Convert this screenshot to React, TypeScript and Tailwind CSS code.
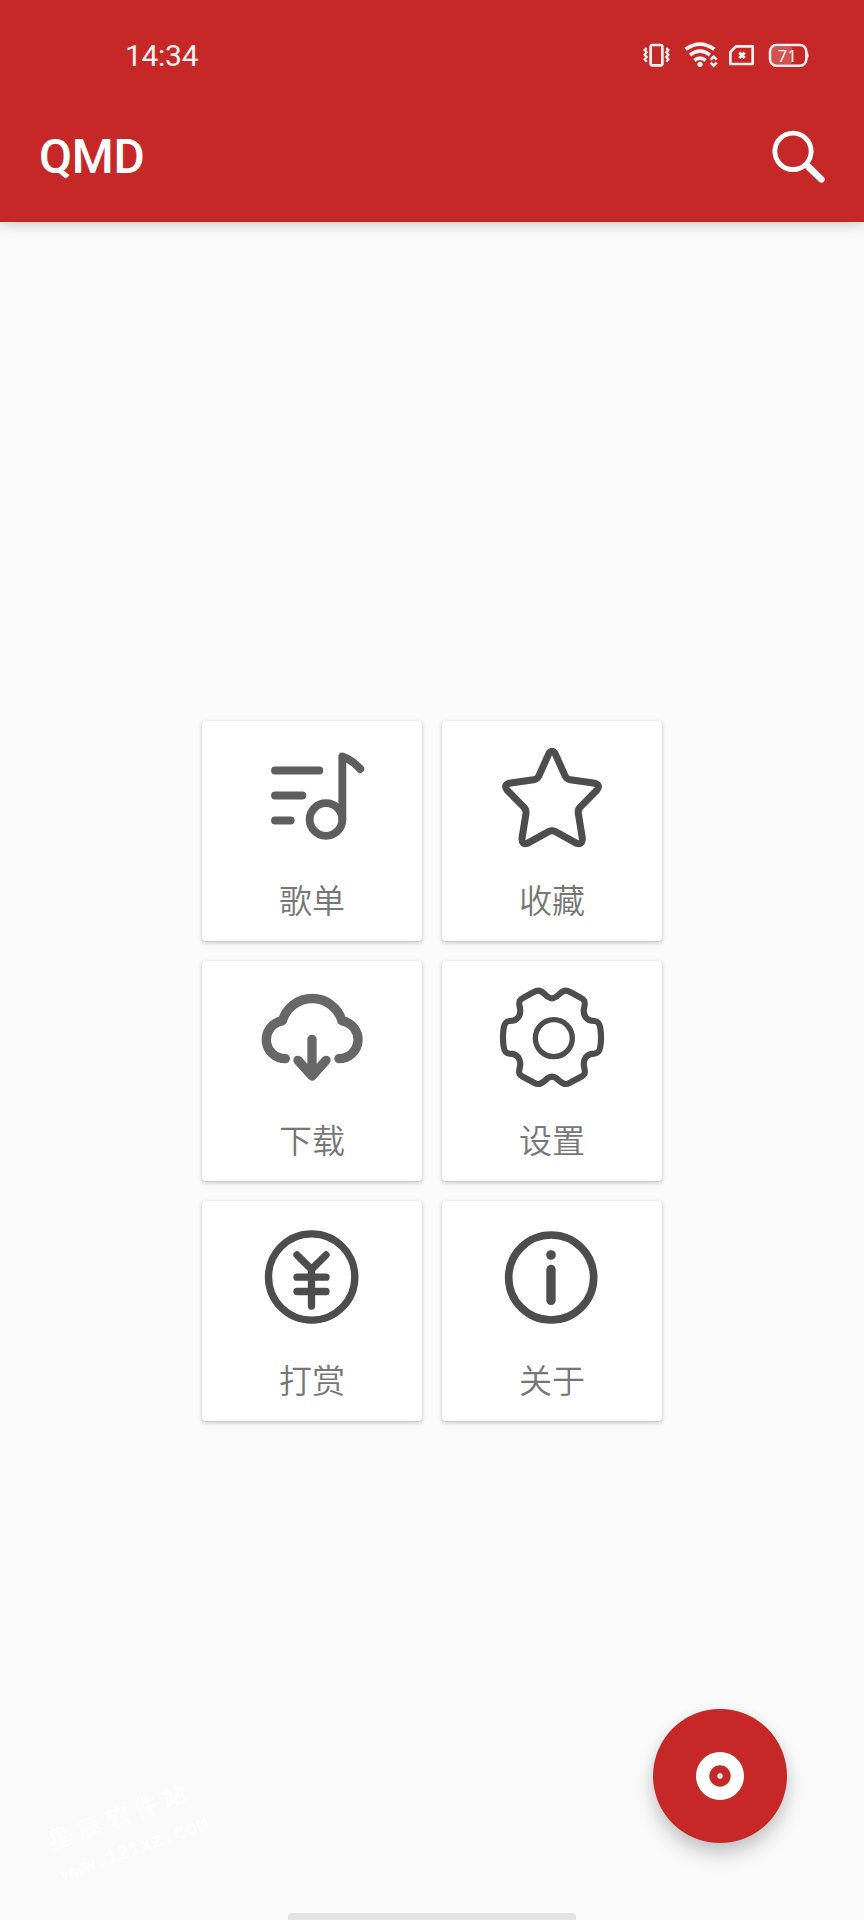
import type { ReactNode } from "react";

interface MenuItem {
  label: string;
  icon: ReactNode;
}

function MenuIcon({ children, className }: { children: ReactNode; className: string }) {
  return (
    <svg
      viewBox="186 93 360 360"
      fill="none"
      stroke="currentColor"
      strokeLinecap="round"
      strokeLinejoin="round"
      className={`size-[120px] ${className}`}
    >
      {children}
    </svg>
  );
}

const items: MenuItem[] = [
  {
    label: "歌单",
    icon: (
      <MenuIcon className="text-[#5e5e5e]">
        <g strokeWidth="23.500">
          <path d="M255 181.5H388M255 256.5H337M255 331.5H302" />
          <circle cx="408" cy="328.5" r="49" />
          <path d="M457 328V139.500Q484 148 511 177" />
        </g>
      </MenuIcon>
    ),
  },
  {
    label: "收藏",
    icon: (
      <MenuIcon className="text-[#4d4d4d]">
        <path
          strokeWidth="21"
          d="M357 130Q366 117 375 130L405 197Q410 208 421 209L495 220Q512 225 501 240L452 290Q443 298 445 310L457 385Q457 405 440 400L375 364Q366 360 357 364L292 400Q275 405 276 385L288 310Q289 298 280 290L231 240Q220 225 237 220L311 209Q322 208 327 197Z"
        />
      </MenuIcon>
    ),
  },
  {
    label: "下载",
    icon: (
      <MenuIcon className="text-[#676767]">
        <g strokeWidth="28">
          <path d="M286 326A57 57 0 0 1 277 212.700A93.200 93.200 0 0 1 456 212.700A57 57 0 0 1 447 326" />
          <path d="M366 268V375M324 331L366 378L408 331" />
        </g>
      </MenuIcon>
    ),
  },
  {
    label: "设置",
    icon: (
      <MenuIcon className="text-[#4d4d4d]">
        <path
          strokeWidth="18.500"
          d="M366 145C384 145 390 122 407 122C414 122 418 125 422 127L452 143C466 150 466 158 463 170C456 196 470 213 493 213C506 214 509 222 511 235C514 254 514 270 511 290C509 303 506 310 493 311C470 311 456 328 463 354C466 368 466 374 452 381L422 397C418 399 414 402 407 402C390 402 384 380 366 380C348 380 342 402 325 402C318 402 314 399 310 397L280 381C266 374 266 368 269 354C276 328 262 311 239 311C226 310 223 303 221 290C218 270 218 254 221 235C223 222 226 214 239 213C262 213 276 196 269 170C266 158 266 150 280 143L310 127C314 125 318 122 325 122C342 122 348 145 366 145Z"
        />
        <circle cx="371.500" cy="264.500" r="55.500" strokeWidth="16" />
      </MenuIcon>
    ),
  },
  {
    label: "打赏",
    icon: (
      <MenuIcon className="text-[#4d4d4d]">
        <g strokeWidth="22">
          <circle cx="365" cy="261" r="129.500" />
          <path d="M321 195L364.500 238L408 195M364.500 238V348M321 261.500H408M321 304.500H408" />
        </g>
      </MenuIcon>
    ),
  },
  {
    label: "关于",
    icon: (
      <MenuIcon className="text-[#4d4d4d]">
        <circle cx="363.500" cy="262.500" r="127.500" strokeWidth="23" />
        <path strokeWidth="28" d="M363 238.500V331" />
        <circle cx="363" cy="195" r="14.500" fill="currentColor" stroke="none" />
      </MenuIcon>
    ),
  },
];

function StatusIcons() {
  return (
    <svg viewBox="0 0 600 150" fill="none" stroke="#fff1ef" className="h-[50px] w-[200px]">
      {/* vibrate */}
      <rect x="62" y="45" width="35" height="61" rx="5" strokeWidth="8" />
      <path
        strokeWidth="7"
        d="M50 54L44 60L50 67L44 74L50 81L44 88L50 95M109 54L115 60L109 67L115 74L109 81L115 88L109 95"
      />
      {/* wifi */}
      <g strokeWidth="11">
        <path d="M167 58Q210 27 253 58" />
        <path d="M180 75Q210 52 240 75" />
        <path d="M193 91Q210 78 227 91" />
      </g>
      <circle cx="210" cy="103" r="8" fill="#fff1ef" stroke="none" />
      <path strokeWidth="8" d="M242 89L251 80L260 89M242 98L251 107L260 98" />
      {/* sim card */}
      <path strokeWidth="8" strokeLinejoin="round" d="M318 49H368V102H301V66Z" />
      <path strokeWidth="9" d="M328 68L344 84M344 68L328 84" />
      {/* battery */}
      <rect x="424" y="50" width="64" height="52" rx="10" fill="#d25252" stroke="none" />
      <rect x="420" y="45" width="109" height="62" rx="19" strokeWidth="7.500" />
      <path d="M531 65Q541 76 531 87Z" fill="#fff1ef" stroke="none" />
      <text
        x="472"
        y="95"
        textAnchor="middle"
        fill="#fff1ef"
        stroke="none"
        fontSize="51"
        fontFamily="'Noto Sans', sans-serif"
      >
        71
      </text>
    </svg>
  );
}

export default function App() {
  return (
    <div className="relative flex h-[1920px] w-[864px] flex-col overflow-hidden bg-[#fafafa] font-['Roboto','Noto_Sans_CJK_SC',sans-serif]">
      <header className="h-[222px] shrink-0 bg-[#c62828] shadow-[0_3px_12px_rgba(0,0,0,0.18)]">
        <div className="flex h-[90px] items-center justify-between pt-5 pr-[34px] pl-[125px]">
          <span className="pt-px text-[30px] leading-none tracking-[-0.3px] text-[#fff1ef]">14:34</span>
          <StatusIcons />
        </div>
        <div className="flex h-[132px] items-center justify-between pt-[2px] pr-[38px] pl-[39px]">
          <h1 className="text-[48px] leading-none font-medium tracking-[-0.3px] text-white">QMD</h1>
          <svg viewBox="96 60 162 162" fill="none" stroke="#fff" className="size-[54px]">
            <circle cx="159" cy="124" r="54.500" strokeWidth="14.500" />
            <path d="M200 164L208 172" strokeWidth="16" />
            <path d="M206 171L244 208" strokeWidth="20" strokeLinecap="round" />
          </svg>
        </div>
      </header>

      <main className="flex flex-1 items-center justify-center">
        <div className="grid grid-cols-2 gap-5">
          {items.map((item) => (
            <button
              key={item.label}
              className="flex size-[220px] flex-col items-center rounded-[4px] bg-white pt-5 shadow-[0_2px_4px_rgba(0,0,0,0.2),0_0_3px_rgba(0,0,0,0.08)]"
            >
              {item.icon}
              <span className="mt-[21px] font-['Noto_Sans_CJK_SC',sans-serif] text-[33px] leading-[34px] font-[350] text-[#777]">
                {item.label}
              </span>
            </button>
          ))}
        </div>
      </main>

      <div className="absolute top-[1796px] left-[38px] w-[190px] -rotate-[20deg] text-white">
        <div className="pl-3 font-['Noto_Sans_CJK_SC',sans-serif] text-[23px] leading-[30px] font-medium tracking-[7.500px]">
          星辰软件站
        </div>
        <div className="mt-2 pl-3 font-['Liberation_Mono',monospace] text-[20px] leading-[30px]">
          www.121xz.com
        </div>
      </div>

      <button className="absolute top-[1709px] left-[653px] flex size-[134px] items-center justify-center rounded-full bg-[#c62828] shadow-[0_12px_20px_rgba(0,0,0,0.18),0_3px_14px_rgba(0,0,0,0.07)]">
        <svg viewBox="0 0 48 48" className="size-12">
          <circle cx="24" cy="24" r="24" fill="#fff" />
          <circle cx="24" cy="24" r="10.700" fill="#c62828" />
          <circle cx="24" cy="24" r="2.700" fill="#fff" />
        </svg>
      </button>

      <div className="absolute top-[1913px] left-[288px] h-2 w-[288px] rounded-t-[4px] bg-[#e4e4e4]" />
    </div>
  );
}
